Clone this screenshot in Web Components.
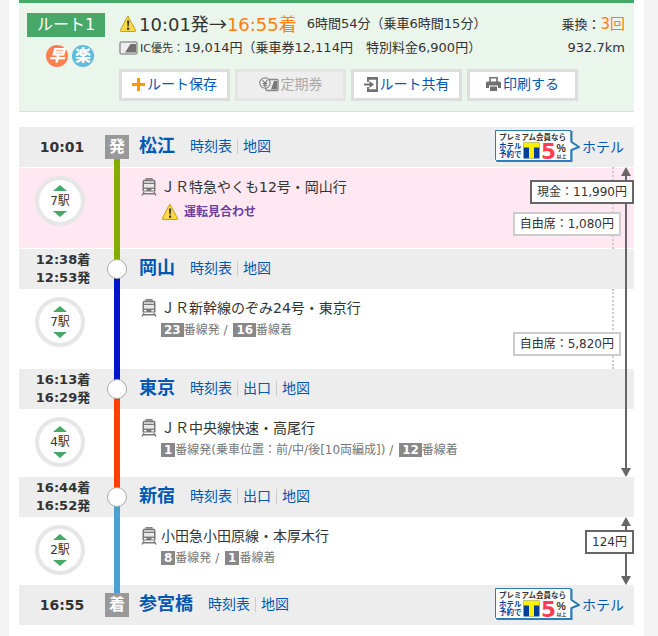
<!DOCTYPE html>
<html lang="ja">
<head>
<meta charset="utf-8">
<meta name="viewport" content="width=device-width, initial-scale=1">
<title>松江→参宮橋 ルート1</title>
<style>
  body {
    margin: 0;
    background: #f4f4f4;
    color: #333;
    font-family: "DejaVu Sans", "Noto Sans CJK JP", sans-serif;
    font-size: 13px;
    --link: #0058b4;
    --green: #48a868;
    --band: #ededed;
  }
  platform-number + platform-number { margin-left: 2px; }
</style>
</head>
<body>
<route-page>
  <route-summary>
    <route-button icon="plus">ルート保存</route-button>
    <route-button icon="pass" disabled>定期券</route-button>
    <route-button icon="share">ルート共有</route-button>
    <route-button icon="print">印刷する</route-button>
  </route-summary>

  <route-list>
    <route-station name="松江" mark="発" links="時刻表,地図" after="#84ad00" hotel>10:01</route-station>
    <route-segment stops="7駅" color="#84ad00" alert="運転見合わせ" seat="自由席：1,080円">ＪＲ特急やくも12号・岡山行</route-segment>
    <route-station name="岡山" links="時刻表,地図" before="#84ad00" after="#0018c4">12:38着<br>12:53発</route-station>
    <route-segment stops="7駅" color="#0018c4" seat="自由席：5,820円">ＪＲ新幹線のぞみ24号・東京行
      <span slot="platform"><platform-number>23</platform-number>番線発 / <platform-number>16</platform-number>番線着</span>
    </route-segment>
    <route-station name="東京" links="時刻表,出口,地図" before="#0018c4" after="#ff4000">16:13着<br>16:29発</route-station>
    <route-segment stops="4駅" color="#ff4000">ＪＲ中央線快速・高尾行
      <span slot="platform"><platform-number>1</platform-number>番線発(乗車位置：前/中/後[10両編成]) / <platform-number>12</platform-number>番線着</span>
    </route-segment>
    <route-station name="新宿" links="時刻表,出口,地図" before="#ff4000" after="#4aa0ce">16:44着<br>16:52発</route-station>
    <route-segment stops="2駅" color="#4aa0ce">小田急小田原線・本厚木行
      <span slot="platform"><platform-number>8</platform-number>番線発 / <platform-number>1</platform-number>番線着</span>
    </route-segment>
    <route-station name="参宮橋" mark="着" links="時刻表,地図" before="#4aa0ce" hotel>16:55</route-station>
    <route-fare rows="2 / 7">現金：11,990円</route-fare>
    <route-fare rows="8 / 9">124円</route-fare>
  </route-list>
</route-page>

<script>
const ICONS = {
  warning: `<svg width="18" height="18" viewBox="0 0 18 18" aria-hidden="true">
    <path d="M9 1.5 16.5 15.2Q17 16.5 15.8 16.5H2.2Q1 16.5 1.5 15.2L8 2.3Q9 .6 10 2.3Z" fill="#ffda45" stroke="#c89b18"/>
    <path d="M8 5.5h2.2l-.5 6H8.5z" fill="#333"/><rect x="8" y="12.6" width="2.2" height="2.2" fill="#333"/></svg>`,
  card: `<svg width="19" height="14" viewBox="0 0 19 14" aria-hidden="true">
    <rect x="1" y="1" width="17" height="12" rx="1.5" fill="#eee" stroke="#999" stroke-width="1.6"/>
    <path d="M6 11.5 11.5 3H17v8.5z" fill="#707070"/></svg>`,
  plus: `<svg width="13" height="13" viewBox="0 0 13 13" aria-hidden="true"><path d="M5 0h3v5h5v3H8v5H5V8H0V5h5z" fill="#ff9900"/></svg>`,
  pass: `<svg width="20" height="15" viewBox="0 0 20 15" aria-hidden="true">
    <rect x="7" y="2.5" width="12" height="11" rx="1" fill="#eee" stroke="#888" stroke-width="1.4"/>
    <path d="M12 12.5 15 4h3v8.5z" fill="#777"/>
    <circle cx="6" cy="6" r="5.2" fill="#eee" stroke="#888" stroke-width="1.2"/>
    <path d="M3.5 3 6 6l2.5-3M6 6v4M3.8 6.4h4.4M3.8 8.2h4.4" fill="none" stroke="#777" stroke-width="1.1"/></svg>`,
  share: `<svg width="14" height="15" viewBox="0 0 14 15" aria-hidden="true">
    <path d="M4 5V1h9v13H4v-4" fill="none" stroke="#707070" stroke-width="1.8"/>
    <path d="M3 1.5h11M3 13.5h11" stroke="#707070" stroke-width="2.4"/>
    <path d="M0 6.5h5.5V4L10 7.5 5.5 11V8.5H0z" fill="#707070"/></svg>`,
  print: `<svg width="15" height="15" viewBox="0 0 15 15" aria-hidden="true">
    <path d="M4 5V.8h7V5" fill="#fff" stroke="#707070" stroke-width="1.6"/>
    <path d="M1.5 4.5h12Q15 4.5 15 6v5h-3V8.5H3V11H0V6q0-1.5 1.5-1.5z" fill="#707070"/>
    <path d="M4 9.5h7V14H4z" fill="#707070"/></svg>`,
  train: `<svg width="16" height="18" viewBox="0 0 16 18" aria-hidden="true">
    <path d="M4.5 .8h7" stroke="#777" stroke-width="1.4"/>
    <path d="M1.5 13.5V4Q1.5 1.6 4 1.6h8q2.500 0 2.500 2.400v9.500z" fill="#777"/>
    <rect x="3" y="3.400" width="10" height="1.200" fill="#fff"/>
    <rect x="3" y="6" width="10" height="3.600" fill="#e8e8e8"/>
    <rect x="3" y="11" width="2.600" height="1.400" fill="#fff"/><rect x="10.400" y="11" width="2.600" height="1.400" fill="#fff"/>
    <path d="M3 14 1 17.500M13 14l2 3.500M2 15.800h12" stroke="#777" stroke-width="1.400"/></svg>`
};

class RoutePage extends HTMLElement {
  connectedCallback() {
    this.attachShadow({ mode: 'open' });
    this.shadowRoot.innerHTML = `
      <style>
        :host {
          display: block;
          box-sizing: border-box;
          min-height: 100vh;
          margin: 0 14px 0 9px;
          padding: 0 10px 11px;
          background: #fff;
        }
      </style>
      <slot></slot>
    `;
  }
}

class RouteButton extends HTMLElement {
  connectedCallback() {
    this.attachShadow({ mode: 'open' });
    this.shadowRoot.innerHTML = `
      <style>
        :host { display: block; flex: 0 0 111px; }
        button {
          display: flex;
          justify-content: center;
          align-items: center;
          gap: 2px;
          box-sizing: border-box;
          width: 100%;
          height: 32px;
          padding: 0 0 2px;
          border: 3px solid #ddd;
          background: #fff;
          color: var(--link);
          font: inherit;
          font-size: 14px;
          line-height: 24px;
          white-space: nowrap;
          cursor: pointer;
        }
        button:disabled {
          border-color: #e4e4e4;
          background: #eee;
          color: #aaa;
          cursor: default;
        }
      </style>
      <button type="button" ${this.hasAttribute('disabled') ? 'disabled' : ''}>
        ${ICONS[this.getAttribute('icon')]}<span><slot></slot></span>
      </button>
    `;
  }
}

class RouteSummary extends HTMLElement {
  connectedCallback() {
    this.attachShadow({ mode: 'open' });
    this.shadowRoot.innerHTML = `
      <style>
        :host {
          display: grid;
          grid-template-columns: 78px 1fr;
          column-gap: 14px;
          margin-bottom: 15px;
          padding: 10px 9px 10px 8px;
          border-top: 3px solid var(--green);
          border-bottom: 1px solid #ddd;
          background: #eaf5ec;
        }
        h1 {
          margin: 0;
          background: var(--green);
          color: #fff;
          font-size: 16px;
          font-weight: normal;
          line-height: 24px;
          text-align: center;
        }
        .badges {
          display: flex;
          justify-content: center;
          gap: 4px;
          margin-top: 8px;
          padding-left: 8px;
        }
        .badges span {
          width: 22px;
          height: 22px;
          border-radius: 50%;
          background: #ff7f50;
          color: #fff;
          font-size: 16px;
          font-weight: 900;
          line-height: 22px;
          text-align: center;
        }
        .badges .fast { font-style: italic; }
        .badges .easy { background: #5bbcdc; }
        .info { margin-top: -1px; }
        .line {
          display: flex;
          align-items: center;
          height: 24px;
          line-height: 24px;
          white-space: nowrap;
        }
        .line svg { flex: none; margin-right: 2px; }
        .time { font-size: 18px; }
        .arrow { font-family: "Noto Sans CJK JP", sans-serif; }
        em { color: #ff7f0e; font-style: normal; }
        .duration { margin-left: 10px; }
        .right { margin-left: auto; }
        .right em { font-size: 15px; }
        small { font-size: 11px; }
        .buttons {
          display: flex;
          flex-wrap: wrap;
          gap: 5px;
          margin-top: 9px;
        }
      </style>
      <div>
        <h1>ルート1</h1>
        <div class="badges"><span class="fast">早</span><span class="easy">楽</span></div>
      </div>
      <div class="info">
        <div class="line">
          ${ICONS.warning}
          <span class="time">10:01発<span class="arrow">→</span><em>16:55着</em></span>
          <span class="duration">6時間54分（乗車6時間15分）</span>
          <span class="right">乗換：<em>3回</em></span>
        </div>
        <div class="line">
          ${ICONS.card}
          <span><small>IC優先：</small>19,014円（乗車券12,114円　特別料金6,900円）</span>
          <span class="right">932.7km</span>
        </div>
        <div class="buttons"><slot></slot></div>
      </div>
    `;
  }
}

// Stations, segments and fares share one grid, so a fare can span several rows
class RouteList extends HTMLElement {
  connectedCallback() {
    this.attachShadow({ mode: 'open' });
    this.shadowRoot.innerHTML = `
      <style>
        :host { display: grid; grid-template-columns: 1fr; }
        ::slotted(*) { grid-column: 1; }
      </style>
      <slot></slot>
    `;
    [...this.children].forEach((child, i) => {
      child.style.gridRow = child.getAttribute('rows') || i + 1;
    });
  }
}

class HotelBanner extends HTMLElement {
  connectedCallback() {
    this.attachShadow({ mode: 'open' });
    this.shadowRoot.innerHTML = `
      <style>
        :host { display: flex; align-items: center; gap: 2px; }
        svg { display: block; font-family: "Noto Sans CJK JP", sans-serif; font-weight: bold; }
        a { color: var(--link); font-size: 14px; text-decoration: none; }
      </style>
      <svg width="85" height="33" viewBox="0 0 170 66">
        <path d="M1 1h151v22l16 11-16 6v23H5l-4-4z" fill="#fff" stroke="#2a7db8" stroke-width="2"/>
        <path d="M3 62h150V40l15-6-15-10V2" fill="none" stroke="#2a7db8" stroke-width="4"/>
        <text x="8" y="19" font-size="15" fill="#333">プレミアム会員なら</text>
        <text x="8" y="38" font-size="15" fill="#004098">ホテル</text>
        <text x="8" y="54" font-size="15" fill="#004098">予約で</text>
        <path d="M57 25h32v32H57z" fill="#004098"/>
        <path d="M57 25h32v10H78v22H68V35H57z" fill="#fff000"/>
        <text x="92" y="57" font-size="43" fill="#ff3c50" font-family="DejaVu Sans">5</text>
        <text x="123" y="44" font-size="21" fill="#333" font-family="Liberation Sans">%</text>
        <text x="123" y="56" font-size="10" fill="#333">以上</text>
      </svg>
      <a href="#">ホテル</a>
    `;
  }
}

class RouteStation extends HTMLElement {
  connectedCallback() {
    const mark = this.getAttribute('mark');
    const links = this.getAttribute('links').split(',');
    this.attachShadow({ mode: 'open' });
    this.shadowRoot.innerHTML = `
      <style>
        :host {
          display: grid;
          grid-template-columns: 86px 24px 1fr auto;
          height: 40px;
          background: var(--band);
        }
        .time {
          align-self: center;
          padding-left: 2px;
          font-size: 13px;
          font-weight: bold;
          line-height: 18px;
          text-align: center;
        }
        .time.end { padding-left: 0; font-size: 14px; }
        .track {
          display: grid;
          grid-template: 1fr 1fr / 1fr;
          justify-items: center;
        }
        .track i { grid-column: 1; width: 6px; }
        .before { grid-row: 1; background: ${this.getAttribute('before') || 'none'}; }
        .after { grid-row: 2; background: ${this.getAttribute('after') || 'none'}; }
        .mark {
          grid-area: 1 / 1 / 3 / 2;
          align-self: center;
          box-sizing: border-box;
          width: 20px;
          height: 20px;
          border: 1px solid #aaa;
          border-radius: 50%;
          background: #fff;
        }
        .mark.end {
          width: 24px;
          height: 24px;
          border: 0;
          border-radius: 0;
          background: #999;
          color: #fff;
          font-size: 16px;
          font-weight: bold;
          line-height: 24px;
          text-align: center;
        }
        .station, hotel-banner { padding-bottom: 2px; }
        .station {
          display: flex;
          align-items: center;
          padding-left: 10px;
          white-space: nowrap;
        }
        h2 { margin: 0 10px 0 0; font-size: 18px; line-height: 24px; }
        a { color: var(--link); text-decoration: none; }
        .links { display: flex; }
        .links a { padding: 0 5px; font-size: 14px; line-height: 15px; }
        .links a + a { border-left: 1px solid #ccc; }
        hotel-banner { padding-right: 10px; }
      </style>
      <div class="time ${mark ? 'end' : ''}"><slot></slot></div>
      <div class="track">
        <i class="before"></i><i class="after"></i>
        <div class="mark ${mark ? 'end' : ''}">${mark || ''}</div>
      </div>
      <div class="station">
        <h2><a href="#">${this.getAttribute('name')}</a></h2>
        <div class="links">${links.map(l => `<a href="#">${l}</a>`).join('')}</div>
      </div>
      ${this.hasAttribute('hotel') ? '<hotel-banner></hotel-banner>' : ''}
    `;
  }
}

class RouteSegment extends HTMLElement {
  connectedCallback() {
    const alert = this.getAttribute('alert');
    const seat = this.getAttribute('seat');
    this.attachShadow({ mode: 'open' });
    this.shadowRoot.innerHTML = `
      <style>
        :host {
          display: grid;
          grid-template-columns: 86px 24px 1fr auto;
        }
        :host([alert]) {
          background: linear-gradient(#fff, #fff) top / 100% 1px no-repeat,
            linear-gradient(#fff, #fff) bottom / 100% 1px no-repeat, #ffe8f2;
        }
        .stops { padding: 8px 4px 0 0; text-align: center; }
        button {
          display: inline-flex;
          flex-direction: column;
          justify-content: center;
          align-items: center;
          box-sizing: border-box;
          width: 50px;
          height: 50px;
          padding: 0;
          border: 4px solid #e6e6e6;
          border-radius: 50%;
          background: #fff;
          color: #333;
          font: inherit;
          font-size: 12px;
          line-height: 20px;
          cursor: pointer;
        }
        button svg { display: block; }
        .track { justify-self: center; width: 6px; background: ${this.getAttribute('color')}; }
        .train {
          display: grid;
          grid-template-columns: 16px 1fr;
          column-gap: 4px;
          align-content: start;
          padding: 8px 0 16px 12px;
          line-height: 22px;
        }
        .train > svg { align-self: center; }
        .name { font-size: 14px; }
        .detail { grid-column: 2; color: #777; font-size: 12px; }
        ::slotted([slot="platform"]) { display: block; }
        .alert {
          display: flex;
          align-items: center;
          gap: 5px;
          margin-top: 3px;
          color: #6b3fa0;
          font-weight: bold;
          text-decoration: none;
        }
        .seat { display: grid; }
        .seat > * { grid-area: 1 / 1; }
        .dots { justify-self: end; margin-right: 20px; border-left: 2px dotted #ccc; }
        .fare { padding: 43px 13px 13px 0; }
        .fare span {
          display: block;
          padding: 0 5px;
          border: 2px solid #ccc;
          background: #fff;
          font-size: 12px;
          line-height: 20px;
          white-space: nowrap;
        }
        :host([alert]) .train, :host([alert]) .stops { padding-top: 9px; }
        :host([alert]) .fare { padding-top: 45px; }
      </style>
      <div class="stops">
        <button type="button">
          <svg width="14" height="6" aria-hidden="true"><path d="M0 6 7 0l7 6z" fill="#48a868"/></svg>
          ${this.getAttribute('stops')}
          <svg width="14" height="6" aria-hidden="true"><path d="M0 0h14L7 6z" fill="#48a868"/></svg>
        </button>
      </div>
      <div class="track"></div>
      <div class="train">
        ${ICONS.train}
        <div class="name"><slot></slot></div>
        <div class="detail">
          ${alert ? `<a class="alert" href="#">${ICONS.warning}${alert}</a>` : ''}
          <slot name="platform"></slot>
        </div>
      </div>
      ${seat ? `<div class="seat"><div class="dots"></div><div class="fare"><span>${seat}</span></div></div>` : ''}
    `;
  }
}

class PlatformNumber extends HTMLElement {
  connectedCallback() {
    this.attachShadow({ mode: 'open' });
    this.shadowRoot.innerHTML = `
      <style>
        :host {
          display: inline-block;
          padding: 0 3px;
          background: #888;
          color: #fff;
          font-weight: bold;
          line-height: 14px;
        }
      </style>
      <slot></slot>
    `;
  }
}

class RouteFare extends HTMLElement {
  connectedCallback() {
    this.attachShadow({ mode: 'open' });
    this.shadowRoot.innerHTML = `
      <style>
        :host { display: grid; justify-self: end; z-index: 1; }
        .arrow, .price { grid-area: 1 / 1; }
        .arrow {
          display: flex;
          flex-direction: column;
          align-items: center;
          justify-self: end;
          margin-right: 3px;
        }
        .arrow i { flex: 1; width: 2px; background: #666; }
        .arrow svg { display: block; }
        .price {
          align-self: start;
          margin-top: 13px;
          padding: 0 5px;
          border: 2px solid #666;
          background: #fff;
          font-size: 12px;
          line-height: 20px;
          white-space: nowrap;
        }
      </style>
      <div class="arrow">
        <svg width="10" height="9" aria-hidden="true"><path d="M5 0l5 9H0z" fill="#666"/></svg>
        <i></i>
        <svg width="10" height="9" aria-hidden="true"><path d="M0 0h10L5 9z" fill="#666"/></svg>
      </div>
      <div class="price"><slot></slot></div>
    `;
  }
}

customElements.define('platform-number', PlatformNumber);
customElements.define('hotel-banner', HotelBanner);
customElements.define('route-button', RouteButton);
customElements.define('route-summary', RouteSummary);
customElements.define('route-station', RouteStation);
customElements.define('route-segment', RouteSegment);
customElements.define('route-fare', RouteFare);
customElements.define('route-list', RouteList);
customElements.define('route-page', RoutePage);
</script>
</body>
</html>
